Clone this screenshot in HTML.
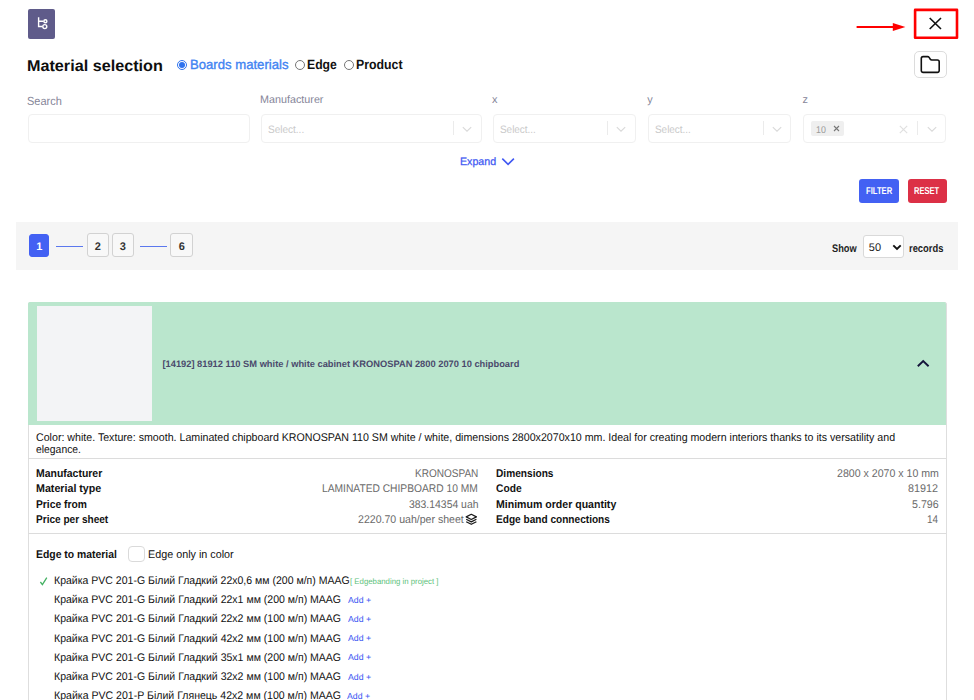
<!DOCTYPE html>
<html lang="en">
<head>
<meta charset="utf-8">
<title>Material selection</title>
<style>
*{box-sizing:border-box;margin:0;padding:0}
html,body{width:974px;height:700px;overflow:hidden;background:#fff}
body{font-family:"Liberation Sans","DejaVu Sans",sans-serif;color:#111;position:relative;font-size:12px}
.a{position:absolute;display:block}
.t{position:absolute;white-space:nowrap;line-height:1;transform-origin:0 0;text-rendering:geometricPrecision}
.radio{width:10px;height:10px;border-radius:50%;border:1px solid #767676;background:#fff}
.radio.on{border-color:#2f73ee}
.radio.on:after{content:"";position:absolute;left:1px;top:1px;width:6px;height:6px;border-radius:50%;background:#2f73ee}
.inp{top:114px;height:29px;border:1px solid #f0f0f0;border-radius:4px;background:#fff}
.sep{width:1px;height:14px;background:#ebebeb;top:121px}
.btn{top:179px;height:23.500px;border-radius:3px}
.pg{top:233px;height:23.500px;border:1px solid #d2d2d2;border-radius:3px;background:#f8f8f8}
.ln{height:1px;background:#5b78ee;top:246px}
.hr{left:28px;width:918px;height:1px;background:#dcdcdc}
</style>
</head>
<body>
<div class="a" style="left:28px;top:9px;width:27px;height:30px;background:#5f5b8a;border-radius:2px"></div>
<svg class="a" style="left:36px;top:16px" width="14" height="15" viewBox="0 0 14 15" fill="none" stroke="#fff" stroke-width="1.400"><path d="M2.600 1.300v9.200h3.800M2.600 5.300h5"/><circle cx="9.400" cy="5.300" r="1.500"/><circle cx="8.800" cy="10.600" r="2"/></svg>
<svg class="a" style="left:855px;top:20px" width="54" height="14" viewBox="0 0 54 14"><path d="M1.600 6.900h38" stroke="#ff0000" stroke-width="2" fill="none"/><path d="M37.800 2.900L50.400 6.900l-12.600 4z" fill="#ff0000"/></svg>
<svg class="a" style="left:912px;top:7px" width="48" height="34" viewBox="0 0 48 34"><rect x="3.100" y="2.900" width="41.900" height="27.800" fill="none" stroke="#ff0000" stroke-width="2.600" stroke-linejoin="round"/></svg>
<svg class="a" style="left:928px;top:16px" width="15" height="15" viewBox="0 0 15 15"><path d="M1.700 2l11.300 11M13 2l-11.300 11" stroke="#111" stroke-width="1.600" fill="none"/></svg>
<div class="a" style="left:914px;top:51px;width:32.500px;height:27px;border:1px solid #dcdcdc;border-radius:5px;background:#fff"></div>
<svg class="a" style="left:919px;top:54px" width="23" height="21" viewBox="0 0 23 21"><path d="M2.300 4.400a1.800 1.800 0 0 1 1.800-1.800h4.500a1.800 1.800 0 0 1 1.500 0.800l1.200 1.800a1.800 1.800 0 0 0 1.500 0.800h5.600a1.800 1.800 0 0 1 1.800 1.800v8.800a1.800 1.800 0 0 1-1.800 1.800h-14.300a1.800 1.800 0 0 1-1.800-1.800z" fill="none" stroke="#111" stroke-width="1.600" stroke-linejoin="round"/></svg>

<div class="a radio on" style="left:177.400px;top:59.900px"></div>
<div class="a radio" style="left:294.900px;top:59.800px"></div>
<div class="a radio" style="left:344.200px;top:59.800px"></div>

<div class="a inp" style="left:28px;width:222px"></div>
<div class="a inp" style="left:260.500px;width:221.500px"></div>
<div class="a inp" style="left:492.500px;width:143px"></div>
<div class="a inp" style="left:647.500px;width:143px"></div>
<div class="a inp" style="left:803px;width:143px"></div>
<i class="a sep" style="left:452.500px"></i><i class="a sep" style="left:606.500px"></i><i class="a sep" style="left:762.500px"></i><i class="a sep" style="left:917px"></i>
<svg class="a" style="left:462px;top:126px" width="10" height="7" viewBox="0 0 10 7"><path d="M0.800 1.200l4.200 4 4.200-4" fill="none" stroke="#d9d9d9" stroke-width="1.100"/></svg>
<svg class="a" style="left:615.500px;top:126px" width="10" height="7" viewBox="0 0 10 7"><path d="M0.800 1.200l4.200 4 4.200-4" fill="none" stroke="#d9d9d9" stroke-width="1.100"/></svg>
<svg class="a" style="left:771.500px;top:126px" width="10" height="7" viewBox="0 0 10 7"><path d="M0.800 1.200l4.200 4 4.200-4" fill="none" stroke="#d9d9d9" stroke-width="1.100"/></svg>
<svg class="a" style="left:926.500px;top:126px" width="10" height="7" viewBox="0 0 10 7"><path d="M0.800 1.200l4.200 4 4.200-4" fill="none" stroke="#d9d9d9" stroke-width="1.100"/></svg>
<div class="a" style="left:810.700px;top:121.300px;width:33.800px;height:14.300px;background:#efefef;border-radius:2px"></div>
<svg class="a" style="left:833px;top:125px" width="7" height="7" viewBox="0 0 7 7"><path d="M1 1l5 5M6 1l-5 5" stroke="#777" stroke-width="1.100" fill="none"/></svg>
<svg class="a" style="left:899px;top:124.500px" width="9" height="9" viewBox="0 0 9 9"><path d="M0.800 0.800l7.400 7.400M8.200 0.800l-7.400 7.400" stroke="#e0e0e0" stroke-width="1.200" fill="none"/></svg>

<svg class="a" style="left:501px;top:157px" width="14" height="9" viewBox="0 0 14 9"><path d="M1.300 1.700l5.800 5.600 5.800-5.600" fill="none" stroke="#4058f2" stroke-width="1.600"/></svg>

<div class="a btn" style="left:859px;width:40px;background:#4361f3"></div>
<div class="a btn" style="left:908px;width:38.700px;background:#dc3046"></div>

<div class="a" style="left:16px;top:222.300px;width:941.500px;height:48px;background:#f5f5f5"></div>
<div class="a pg" style="left:28.700px;top:234px;width:20.800px;height:22.500px;background:#4361f3;border-color:#4361f3"></div>
<i class="a ln" style="left:56px;width:26.700px"></i>
<div class="a pg" style="left:87px;width:22px"></div>
<div class="a pg" style="left:111.500px;width:22.500px"></div>
<i class="a ln" style="left:140.200px;width:26.500px"></i>
<div class="a pg" style="left:170.200px;width:22.600px"></div>
<div class="a" style="left:862.500px;top:235.300px;width:41px;height:22.800px;border:1px solid #d9d9d9;border-radius:3px;background:#fff"></div>
<svg class="a" style="left:891.500px;top:244px" width="10" height="7" viewBox="0 0 10 7"><path d="M1.300 1.300l3.700 3.700 3.700-3.700" fill="none" stroke="#111" stroke-width="1.900"/></svg>

<div class="a" style="left:28px;top:301.800px;width:918.500px;height:410px;border:1px solid #dedede;border-radius:2px;background:#fff"></div>
<div class="a" style="left:28px;top:301.800px;width:918.300px;height:123.400px;background:#bae6cd;border-radius:2px 2px 0 0"></div>
<div class="a" style="left:37px;top:306px;width:115px;height:115px;background:#f3f4f6"></div>
<svg class="a" style="left:916px;top:359px" width="14" height="9" viewBox="0 0 14 9"><path d="M1.800 7.200l5.400-5.200 5.400 5.200" fill="none" stroke="#14143a" stroke-width="1.900"/></svg>
<i class="a hr" style="top:458px"></i>
<i class="a hr" style="top:533px"></i>
<svg class="a" style="left:465px;top:513px" width="13" height="13" viewBox="0 0 13 13" fill="none" stroke="#1a1a1a" stroke-width="1.250" stroke-linejoin="round"><path d="M6.300 1.300l5.100 2.600-5.100 2.600-5.100-2.600z"/><path d="M1.200 6.300l5.100 2.600 5.100-2.600M1.200 8.700l5.100 2.600 5.100-2.600"/></svg>
<div class="a" style="left:128.200px;top:545.500px;width:16.400px;height:16.400px;border:1px solid #dadada;border-radius:4px;background:#fff"></div>
<svg class="a" style="left:39px;top:576px" width="10" height="10" viewBox="0 0 10 10"><path d="M1.400 6l2 2.700 4.400-7.100" fill="none" stroke="#44b163" stroke-width="1.300"/></svg>

<div class="t" style="left:27.22px;top:59.00px;font-size:15.8px;color:#0e0e0e;font-weight:700;transform:scaleX(1.0242)">Material selection</div>
<div class="t" style="left:189.82px;top:58.00px;font-size:13.3px;color:#3f83f2;-webkit-text-stroke:0.35px #3f83f2;transform:scaleX(0.9868)">Boards materials</div>
<div class="t" style="left:307.28px;top:58.00px;font-size:13.3px;color:#111;font-weight:700;transform:scaleX(0.9175)">Edge</div>
<div class="t" style="left:356.38px;top:58.00px;font-size:13.3px;color:#111;font-weight:700;transform:scaleX(0.9272)">Product</div>
<div class="t" style="left:27.30px;top:96.00px;font-size:11.8px;color:#868699;transform:scaleX(0.9310)">Search</div>
<div class="t" style="left:259.62px;top:95.00px;font-size:10.9px;color:#868699;transform:scaleX(0.9890)">Manufacturer</div>
<div class="t" style="left:492.12px;top:95.00px;font-size:10.9px;color:#868699">x</div>
<div class="t" style="left:647.37px;top:95.00px;font-size:10.9px;color:#868699">y</div>
<div class="t" style="left:802.62px;top:95.00px;font-size:10.9px;color:#868699">z</div>
<div class="t" style="left:267.85px;top:125.00px;font-size:10.8px;color:#c9c9c9;transform:scaleX(0.9270)">Select...</div>
<div class="t" style="left:500.45px;top:125.00px;font-size:10.8px;color:#c9c9c9;transform:scaleX(0.9190)">Select...</div>
<div class="t" style="left:655.45px;top:125.00px;font-size:10.8px;color:#c9c9c9;transform:scaleX(0.9190)">Select...</div>
<div class="t" style="left:815.73px;top:126.00px;font-size:9.8px;color:#9a9a9a;transform:scaleX(0.9001)">10</div>
<div class="t" style="left:459.63px;top:157.00px;font-size:10.8px;color:#4058f2;-webkit-text-stroke:0.25px #4058f2;transform:scaleX(0.9874)">Expand</div>
<div class="t" style="left:865.89px;top:187.00px;font-size:9.9px;color:#fff;font-weight:700;transform:scaleX(0.7766)">FILTER</div>
<div class="t" style="left:914.19px;top:187.00px;font-size:9.9px;color:#fff;font-weight:700;transform:scaleX(0.7647)">RESET</div>
<div class="t" style="left:832.43px;top:244.00px;font-size:11px;color:#222;font-weight:700;transform:scaleX(0.8400)">Show</div>
<div class="t" style="left:868.86px;top:243.00px;font-size:11px;color:#222">50</div>
<div class="t" style="left:908.68px;top:244.00px;font-size:11px;color:#222;font-weight:700;transform:scaleX(0.8524)">records</div>
<div class="t" style="left:36.14px;top:242.00px;font-size:11px;color:#fff;font-weight:700">1</div>
<div class="t" style="left:94.77px;top:242.00px;font-size:11px;color:#333;font-weight:700">2</div>
<div class="t" style="left:119.71px;top:242.00px;font-size:11px;color:#333;font-weight:700">3</div>
<div class="t" style="left:178.63px;top:242.00px;font-size:11px;color:#333;font-weight:700">6</div>
<div class="t" style="left:162.48px;top:360.00px;font-size:9.3px;color:#4a4a6c;font-weight:700">[14192] 81912 110 SM white / white cabinet KRONOSPAN 2800 2070 10 chipboard</div>
<div class="t" style="left:35.96px;top:433.00px;font-size:11.2px;color:#111;transform:scaleX(0.9508)">Color: white. Texture: smooth. Laminated chipboard KRONOSPAN 110 SM white / white, dimensions 2800x2070x10 mm. Ideal for creating modern interiors thanks to its versatility and</div>
<div class="t" style="left:36.06px;top:445.00px;font-size:11.2px;color:#111;transform:scaleX(0.9270)">elegance.</div>
<div class="t" style="left:35.80px;top:469.00px;font-size:11.2px;color:#111;font-weight:700;transform:scaleX(0.9349)">Manufacturer</div>
<div class="t" style="left:35.79px;top:484.00px;font-size:11.2px;color:#111;font-weight:700;transform:scaleX(0.9543)">Material type</div>
<div class="t" style="left:35.81px;top:500.00px;font-size:11.2px;color:#111;font-weight:700;transform:scaleX(0.9202)">Price from</div>
<div class="t" style="left:35.83px;top:515.00px;font-size:11.2px;color:#111;font-weight:700;transform:scaleX(0.8998)">Price per sheet</div>
<div class="t" style="left:414.88px;top:469.00px;font-size:11.2px;color:#6a6a6a;transform:scaleX(0.8963)">KRONOSPAN</div>
<div class="t" style="left:322.46px;top:484.00px;font-size:11.2px;color:#6a6a6a;transform:scaleX(0.9157)">LAMINATED CHIPBOARD 10 MM</div>
<div class="t" style="left:408.60px;top:500.00px;font-size:11.2px;color:#6a6a6a;transform:scaleX(0.9304)">383.14354 uah</div>
<div class="t" style="left:357.57px;top:515.00px;font-size:11.2px;color:#6a6a6a;transform:scaleX(0.9450)">2220.70 uah/per sheet</div>
<div class="t" style="left:495.82px;top:469.00px;font-size:11.2px;color:#111;font-weight:700;transform:scaleX(0.9066)">Dimensions</div>
<div class="t" style="left:496.08px;top:484.00px;font-size:11.2px;color:#111;font-weight:700;transform:scaleX(0.9142)">Code</div>
<div class="t" style="left:495.79px;top:500.00px;font-size:11.2px;color:#111;font-weight:700;transform:scaleX(0.9438)">Minimum order quantity</div>
<div class="t" style="left:495.82px;top:515.00px;font-size:11.2px;color:#111;font-weight:700;transform:scaleX(0.9026)">Edge band connections</div>
<div class="t" style="left:836.67px;top:469.00px;font-size:11.2px;color:#6a6a6a;transform:scaleX(0.9474)">2800 x 2070 x 10 mm</div>
<div class="t" style="left:908.43px;top:484.00px;font-size:11.2px;color:#6a6a6a;transform:scaleX(0.9643)">81912</div>
<div class="t" style="left:911.67px;top:500.00px;font-size:11.2px;color:#6a6a6a;transform:scaleX(0.9535)">5.796</div>
<div class="t" style="left:927.14px;top:515.00px;font-size:11.2px;color:#6a6a6a;transform:scaleX(0.8872)">14</div>
<div class="t" style="left:35.80px;top:550.00px;font-size:11.2px;color:#111;font-weight:700;transform:scaleX(0.9298)">Edge to material</div>
<div class="t" style="left:147.92px;top:550.00px;font-size:11.2px;color:#111;transform:scaleX(0.9632)">Edge only in color</div>
<div class="t" style="left:53.54px;top:576.00px;font-size:11px;color:#111;transform:scaleX(0.9561)">Крайка PVC 201-G Білий Гладкий 22x0,6 мм (200 м/п) MAAG</div>
<div class="t" style="left:350.14px;top:578.00px;font-size:8px;color:#5bbf7a;transform:scaleX(0.9755)">[ Edgebanding in project ]</div>
<div class="t" style="left:53.54px;top:595.00px;font-size:11px;color:#111;transform:scaleX(0.9567)">Крайка PVC 201-G Білий Гладкий 22x1 мм (200 м/п) MAAG</div>
<div class="t" style="left:348.38px;top:596.00px;font-size:8.6px;color:#4058f2;transform:scaleX(1.0152)">Add +</div>
<div class="t" style="left:53.54px;top:614.00px;font-size:11px;color:#111;transform:scaleX(0.9567)">Крайка PVC 201-G Білий Гладкий 22x2 мм (100 м/п) MAAG</div>
<div class="t" style="left:348.38px;top:615.00px;font-size:8.6px;color:#4058f2;transform:scaleX(1.0152)">Add +</div>
<div class="t" style="left:53.54px;top:634.00px;font-size:11px;color:#111;transform:scaleX(0.9567)">Крайка PVC 201-G Білий Гладкий 42x2 мм (100 м/п) MAAG</div>
<div class="t" style="left:348.38px;top:634.00px;font-size:8.6px;color:#4058f2;transform:scaleX(1.0152)">Add +</div>
<div class="t" style="left:53.54px;top:653.00px;font-size:11px;color:#111;transform:scaleX(0.9567)">Крайка PVC 201-G Білий Гладкий 35x1 мм (200 м/п) MAAG</div>
<div class="t" style="left:348.38px;top:653.00px;font-size:8.6px;color:#4058f2;transform:scaleX(1.0152)">Add +</div>
<div class="t" style="left:53.54px;top:672.00px;font-size:11px;color:#111;transform:scaleX(0.9567)">Крайка PVC 201-G Білий Гладкий 32x2 мм (100 м/п) MAAG</div>
<div class="t" style="left:348.38px;top:673.00px;font-size:8.6px;color:#4058f2;transform:scaleX(1.0152)">Add +</div>
<div class="t" style="left:53.53px;top:691.00px;font-size:11px;color:#111;transform:scaleX(0.9595)">Крайка PVC 201-P Білий Глянець 42x2 мм (100 м/п) MAAG</div>
<div class="t" style="left:347.38px;top:692.00px;font-size:8.6px;color:#4058f2;transform:scaleX(1.0152)">Add +</div>
</body>
</html>
